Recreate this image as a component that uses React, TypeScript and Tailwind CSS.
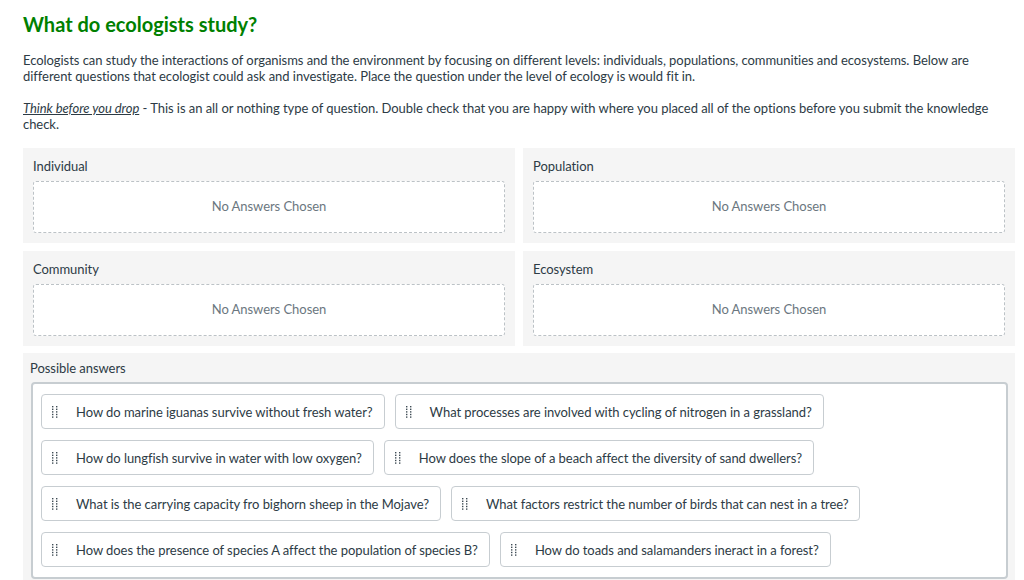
import React from "react";

const levels = ["Individual", "Population", "Community", "Ecosystem"];

const answers = [
  ["How do marine iguanas survive without fresh water?", "What processes are involved with cycling of nitrogen in a grassland?"],
  ["How do lungfish survive in water with low oxygen?", "How does the slope of a beach affect the diversity of sand dwellers?"],
  ["What is the carrying capacity fro bighorn sheep in the Mojave?", "What factors restrict the number of birds that can nest in a tree?"],
  ["How does the presence of species A affect the population of species B?", "How do toads and salamanders ineract in a forest?"],
];

function Grip() {
  const dots = [];
  for (let r = 0; r < 5; r++) {
    for (let c = 0; c < 2; c++) {
      dots.push(<rect key={`${r}-${c}`} x={c * 4} y={r * 2.6} width="1.4" height="1.4" fill="#3f4c55" />);
    }
  }
  return (
    <svg width="6" height="12" viewBox="0 0 6 12" className="shrink-0">
      {dots}
    </svg>
  );
}

function DropZone({ label }: { label: string }) {
  return (
    <div className="bg-[#f5f5f5] px-[10px] pt-[8px] pb-[10px]">
      <div className="h-5 leading-5 mb-[5px]">{label}</div>
      <div className="h-[52px] bg-white border border-dashed border-[#bcc2c6] rounded-[3px] flex items-center justify-center text-[#6b7780]">
        No Answers Chosen
      </div>
    </div>
  );
}

function Chip({ text }: { text: string }) {
  return (
    <div className="h-[35px] flex items-center gap-[18px] bg-white border border-[#c7cdd1] rounded-[4px] pl-[10px] pr-[11px] leading-5">
      <Grip />
      <span>{text}</span>
    </div>
  );
}

export default function App() {
  return (
    <div
      className="bg-white pl-[23px] pr-[9px] pt-[12px] text-[13px] tracking-[-0.05px] text-[#2d3b45] h-[580px] overflow-hidden"
      style={{ fontFamily: "Lato, 'Open Sans', sans-serif" }}
    >
      <h1 className="text-[20px] leading-6 font-bold tracking-normal text-[#008000]">What do ecologists study?</h1>
      <p className="mt-[16px] leading-4">
        Ecologists can study the interactions of organisms and the environment by focusing on different levels: individuals, populations, communities and ecosystems. Below are different questions that ecologist could ask and investigate. Place the question under the level of ecology is would fit in.
      </p>
      <p className="mt-[16px] leading-4">
        <span className="italic underline">Think before you drop</span> - This is an all or nothing type of question. Double check that you are happy with where you placed all of the options before you submit the knowledge check.
      </p>
      <div className="mt-[16px] grid grid-cols-2 gap-[8px]">
        {levels.map((l) => (
          <DropZone key={l} label={l} />
        ))}
      </div>
      <div className="mt-[7px] bg-[#f5f5f5] pl-[7px] pr-[7px] pt-[5px] pb-[10px]">
        <div className="h-5 leading-5 mb-[4px]">Possible answers</div>
        <div className="ml-[1px] bg-white border-2 border-[#c7cdd1] rounded-[4px] pl-[8px] pr-[8px] pt-[10px] pb-[10px] flex flex-col gap-[11px]">
          {answers.map((row, i) => (
            <div key={i} className="flex gap-[10px]">
              {row.map((a) => (
                <Chip key={a} text={a} />
              ))}
            </div>
          ))}
        </div>
      </div>
    </div>
  );
}
